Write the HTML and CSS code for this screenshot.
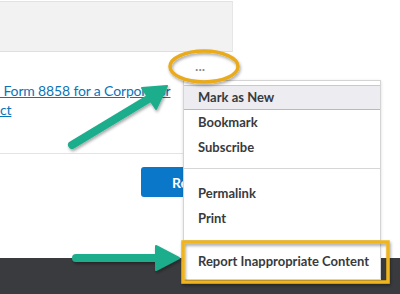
FILE: index.html
```html
<!DOCTYPE html>
<html>
<head>
	<meta name="viewport" content="width=device-width, initial-scale=1.0">
	<link rel="stylesheet" href="styles.css">
</head>
<body>
	<div id="page">
		<!-- grey header strip -->
		<div class="top-strip"></div>

		<!-- post body with the link -->
		<div class="post">
			<a class="post-link" href="#">&nbsp;Form 8858 for a Corporator<br>ct</a>
			<span class="dots">&middot;&middot;&middot;</span>
		</div>

		<!-- reply button row -->
		<div class="actions">
			<button class="reply">Reply</button>
		</div>

		<!-- dark footer -->
		<div class="footer"></div>

		<!-- options menu -->
		<ul class="menu">
			<li class="item active">Mark as New</li>
			<li class="item">Bookmark</li>
			<li class="item">Subscribe</li>
			<li class="sep"></li>
			<li class="item">Permalink</li>
			<li class="item">Print</li>
			<li class="sep"></li>
			<li class="item">Report Inappropriate Content</li>
		</ul>

		<!-- annotation layer -->
		<svg class="marks" width="400" height="294" viewBox="0 0 400 294">
			<defs>
				<filter id="sh" x="-20%" y="-20%" width="140%" height="140%">
					<feDropShadow dx="1" dy="2" stdDeviation="1.5" flood-color="#000" flood-opacity="0.35"/>
				</filter>
			</defs>
			<ellipse cx="204" cy="66.5" rx="34" ry="15.5" fill="none" stroke="#e9ab1c" stroke-width="3.5" filter="url(#sh)"/>
			<rect x="183" y="242" width="205" height="40" fill="none" stroke="#f0b51c" stroke-width="3.5" filter="url(#sh)"/>
			<g fill="#1fae8c" stroke="#1fae8c" filter="url(#sh)">
				<line x1="72" y1="145" x2="150" y2="98" stroke-width="8" stroke-linecap="round"/>
				<polygon points="167,86 142,88 156,109" stroke-width="2" stroke-linejoin="round"/>
				<line x1="76" y1="258" x2="160" y2="258" stroke-width="8" stroke-linecap="round"/>
				<polygon points="179,258 156,246 156,270" stroke-width="2" stroke-linejoin="round"/>
			</g>
		</svg>
	</div>
</body>
</html>
```

FILE: styles.css
```css
body {
	margin: 0;
	background: #fff;
	font-family: Lato, "Open Sans", sans-serif;
}

#page {
	position: relative;
	width: 400px;
	height: 294px;
	overflow: hidden;
}

/* grey header strip */
.top-strip {
	box-sizing: border-box;
	width: 233px;
	height: 51px;
	background: #f2f2f2;
	border-top: 1px solid #e2e2e2;
	border-right: 1px solid #e6e6e6;
	border-bottom: 1px solid #dedede;
	margin-top: 1px;
}

/* post body */
.post {
	position: relative;
	height: 101px;
	border-bottom: 1px solid #e3e3e3;
	width: 183px;
}

.post-link {
	display: block;
	padding-top: 29px;
	color: #0a74b8;
	font-size: 14px;
	letter-spacing: -0.15px;
	line-height: 19px;
	white-space: nowrap;
	text-decoration: underline;
}

.dots {
	position: absolute;
	left: 195px;
	top: 9px;
	color: #8a8a8a;
	font-size: 13px;
}

/* reply button */
.actions {
	height: 104px;
	padding-left: 141px;
	padding-top: 13px;
	box-sizing: border-box;
}

.reply {
	width: 90px;
	height: 30px;
	border: none;
	border-radius: 3px;
	background: #0a77c8;
	color: #fff;
	font-family: Lato, sans-serif;
	font-weight: 700;
	font-size: 14px;
	text-align: left;
	padding-left: 31px;
}

.footer {
	height: 40px;
	background: #3a3b3e;
}

/* options menu */
.menu {
	position: absolute;
	left: 183px;
	top: 80px;
	width: 198px;
	margin: 0;
	padding: 4px 0 5px;
	box-sizing: border-box;
	list-style: none;
	background: #fff;
	border: 1px solid #d4d4d4;
	box-shadow: 0 1px 3px rgba(0, 0, 0, 0.15);
}

.item {
	height: 25px;
	line-height: 25px;
	padding-left: 14px;
	font-size: 13px;
	font-weight: 700;
	color: #393a3d;
}

.item.active {
	height: 23px;
	line-height: 23px;
	background: #ececf1;
	border-top: 1px solid #c9c9cc;
	border-bottom: 1px solid #b9b9bd;
}

.sep {
	height: 1px;
	background: #d6d6d6;
	margin: 8px 0 12px;
}

.sep:nth-of-type(7) {
	margin: 9px 0 8px;
}

/* annotation layer */
.marks {
	position: absolute;
	left: 0;
	top: 0;
	pointer-events: none;
}
```
